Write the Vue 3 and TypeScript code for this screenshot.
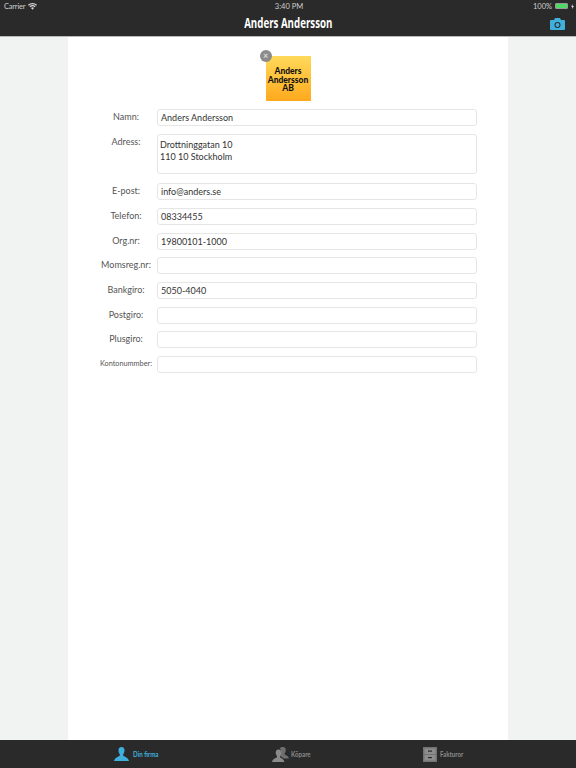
<script setup lang="ts">
interface Field { label: string; value: string; multi?: boolean; small?: boolean }
const fields: Field[] = [
  { label: 'Namn:', value: 'Anders Andersson' },
  { label: 'Adress:', value: 'Drottninggatan 10\n110 10 Stockholm', multi: true },
  { label: 'E-post:', value: 'info@anders.se' },
  { label: 'Telefon:', value: '08334455' },
  { label: 'Org.nr:', value: '19800101-1000' },
  { label: 'Momsreg.nr:', value: '' },
  { label: 'Bankgiro:', value: '5050-4040' },
  { label: 'Postgiro:', value: '' },
  { label: 'Plusgiro:', value: '' },
  { label: 'Kontonummber:', value: '', small: true },
]
</script>

<template>
  <div class="page">
    <header class="top">
      <div class="status">
        <div class="status-left">
          <span>Carrier</span>
          <svg width="9" height="7" viewBox="0 0 18 13"><path d="M9 13 6 9.6a4.4 4.4 0 0 1 6 0Z M4.5 8 2.8 6a9.4 9.4 0 0 1 12.4 0L13.500 8a6.800 6.800 0 0 0-9 0Z M1.600 4.800 0 3a13.500 13.500 0 0 1 18 0l-1.600 1.800a11 11 0 0 0-14.800 0Z" fill="#d8d8d8"/></svg>
        </div>
        <span class="clock">3:40 PM</span>
        <div class="status-right">
          <span>100%</span>
          <span class="battery"><i></i></span>
          <svg width="3" height="5" viewBox="0 0 6 10"><path d="M3.500 0 0 5.500h2.500L2 10l4-6H3.300Z" fill="#d8d8d8"/></svg>
        </div>
      </div>
      <div class="nav">
        <h1>Anders Andersson</h1>
        <svg class="camera" width="15" height="12" viewBox="0 0 15 12">
          <path fill-rule="evenodd" d="M1 2h3l1-2h5l1 2h3a1 1 0 0 1 1 1v8a1 1 0 0 1-1 1H1a1 1 0 0 1-1-1V3a1 1 0 0 1 1-1Zm6.500 2a3 3 0 1 0 0 6 3 3 0 0 0 0-6Zm0 1a2 2 0 1 1 0 4 2 2 0 0 1 0-4Z" fill="#3fb0dc"/>
        </svg>
      </div>
    </header>

    <main class="sheet">
      <div class="logo-wrap">
        <div class="logo">Anders<br />Andersson<br />AB</div>
        <span class="remove">×</span>
      </div>
      <form class="form">
        <div v-for="f in fields" :key="f.label" :class="['row', { 'row-multi': f.multi }]">
          <label :class="['label', { small: f.small }]">{{ f.label }}</label>
          <div :class="['input', { multi: f.multi }]">{{ f.value }}</div>
        </div>
      </form>
    </main>

    <footer class="tabs">
      <div class="tab active">
        <svg width="15" height="14" viewBox="0 0 15 14"><path d="M7.500 0C9.600 0 10.500 1.500 10.500 3.500c0 1.600-.7 3-1.300 3.800v1.500C10.800 9.800 14 10.500 15 14H0c1-3.500 4.200-4.200 5.800-5.200V7.300C5.200 6.500 4.500 5.100 4.500 3.500 4.500 1.500 5.400 0 7.500 0Z" fill="#3fb0dc"/></svg>
        <span>Din firma</span>
      </div>
      <div class="tab">
        <svg width="17" height="15" viewBox="0 0 17 15"><path d="M11 0c1.800 0 2.800 1.300 2.800 3 0 1.500-.6 2.600-1.200 3.400v1.200c1.400.7 3.500 1.200 4.400 3.900h-5.500c-.8-1.300-2.200-1.900-3.300-2.500V7.300c.5-.8.700-2 .6-3.300C8.700 2.800 8.300 1.900 7.900 1.400 8.500.5 9.600 0 11 0Z" fill="#6f6f6f"/><path d="M6.500 2.500c1.900 0 2.800 1.400 2.800 3.100 0 1.500-.6 2.700-1.200 3.500v1.300c1.400.8 3.600 1.300 4.400 4.600H0c.8-3.300 3-3.800 4.900-4.600V9.100C4.300 8.300 3.700 7.100 3.700 5.600c0-1.700.9-3.100 2.800-3.100Z" fill="#8a8a8a"/></svg>
        <span>Köpare</span>
      </div>
      <div class="tab">
        <svg width="14" height="15" viewBox="0 0 14 15"><rect width="14" height="15" fill="#737373"/><rect x="1.500" y="1.500" width="11" height="5.500" fill="#8d8d8d"/><rect x="1.500" y="8" width="11" height="5.500" fill="#8d8d8d"/><rect x="5" y="3.500" width="4" height="1.200" fill="#2a2a2a"/><rect x="5" y="10" width="4" height="1.200" fill="#2a2a2a"/></svg>
        <span>Fakturor</span>
      </div>
    </footer>
  </div>
</template>

<style>
body { margin: 0; }
</style>

<style scoped>
.page {
  width: 576px;
  height: 768px;
  display: flex;
  flex-direction: column;
  background: #f1f3f2;
  font-family: Lato, "Open Sans", sans-serif;
  overflow: hidden;
}
.top {
  height: 37px;
  box-sizing: border-box;
  flex: none;
  background: #2a2a2a;
  border-bottom: 1px solid #b9b9b9;
  color: #fff;
}
.status {
  height: 12px;
  padding: 0 2px 0 4px;
  display: grid;
  grid-template-columns: 1fr auto 1fr;
  align-items: center;
  font-size: 7.500px;
  color: #cfcfcf;
}
.status-left, .status-right { display: flex; align-items: center; gap: 3px; }
.status-left span { letter-spacing: -0.2px; }
.status-right { justify-content: flex-end; }
.battery {
  width: 13px;
  height: 6px;
  box-sizing: border-box;
  border: 1px solid #999;
  border-radius: 1px;
  display: block;
}
.battery i { display: block; height: 100%; background: #4cd964; }
.nav {
  height: 22px;
  position: relative;
  display: flex;
  justify-content: center;
  align-items: center;
}
h1 {
  margin: 0;
  font-family: "Open Sans", sans-serif;
  font-size: 13.500px;
  font-weight: 700;
  transform: scaleX(0.72);
  white-space: nowrap;
}
.camera { position: absolute; right: 11px; top: 6px; }
.sheet {
  flex: 1;
  width: 440px;
  margin: 0 auto;
  background: #fff;
  padding-top: 19px;
  box-sizing: border-box;
}
.logo-wrap {
  position: relative;
  width: 45px;
  height: 45px;
  margin: 0 auto 8.400px;
}
.logo {
  width: 45px;
  height: 45px;
  padding-top: 11px;
  box-sizing: border-box;
  background: linear-gradient(#ffd95a, #ffa91d);
  color: #111;
  text-align: center;
  font-size: 8.500px;
  line-height: 8.500px;
  font-weight: 900;
}
.remove {
  position: absolute;
  left: -6px;
  top: -6px;
  width: 12px;
  height: 12px;
  border-radius: 50%;
  background: #8b8b8b;
  color: #eee;
  font-size: 9px;
  line-height: 12px;
  text-align: center;
}
.form { display: flex; flex-direction: column; gap: 7.680px; padding-left: 32px; }
.row { display: flex; align-items: flex-start; }
.row-multi { margin-bottom: 1.500px; }
.label {
  width: 52px;
  margin-right: 5px;
  flex: none;
  text-align: center;
  font-size: 9px;
  line-height: 15px;
  color: #555;
  white-space: nowrap;
}
.label.small { font-size: 7.300px; }
.input {
  width: 320px;
  height: 17px;
  box-sizing: border-box;
  border: 1px solid #e6e6e6;
  border-radius: 3px;
  padding: 0 3px;
  font-size: 9px;
  line-height: 15px;
  color: #333;
  background: #fff;
}
.input.multi {
  height: 40px;
  padding: 4px 2px;
  line-height: 12px;
  white-space: pre-line;
}
.tabs {
  height: 28px;
  flex: none;
  background: #2a2a2a;
  display: flex;
}
.tab {
  display: flex;
  align-items: center;
  gap: 4px;
  font-size: 7px;
  font-weight: 700;
  color: #8a8a8a;
}
.tab span { transform: scaleX(0.88); transform-origin: left center; }
.tab:nth-child(1) { margin-left: 114px; width: 158px; }
.tab:nth-child(2) { width: 151px; gap: 2px; }
.tab:nth-child(3) { gap: 3px; }
.tab.active { color: #3fb0dc; }
</style>
